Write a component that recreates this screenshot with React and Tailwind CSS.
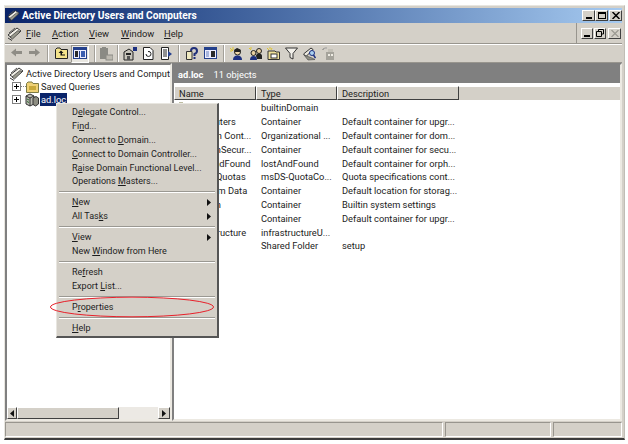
import React from 'react';

const rows = [
  ['Builtin', 'builtinDomain', ''],
  ['Computers', 'Container', 'Default container for upgr...'],
  ['Domain Cont...', 'Organizational ...', 'Default container for dom...'],
  ['ForeignSecur...', 'Container', 'Default container for secu...'],
  ['LostAndFound', 'lostAndFound', 'Default container for orph...'],
  ['NTDS Quotas', 'msDS-QuotaCo...', 'Quota specifications cont...'],
  ['Program Data', 'Container', 'Default location for storag...'],
  ['System', 'Container', 'Builtin system settings'],
  ['Users', 'Container', 'Default container for upgr...'],
  ['Infrastructure', 'infrastructureU...', ''],
  ['setup', 'Shared Folder', 'setup'],
];

const raised = 'border border-t-white border-l-white border-r-[#404040] border-b-[#404040] bg-[#d4d0c8]';
const sunken = 'border-2 border-t-[#808080] border-l-[#808080] border-r-[#ece9e2] border-b-[#ece9e2]';

const Mnemonic = ({ before, letter, after }) => (
  <span>{before}<span className="underline">{letter}</span>{after}</span>
);

const MenuItem = ({ before = '', letter, after = '', arrow }) => (
  <div className="flex items-center justify-between h-[13.8px] pl-[13px] pr-[4px]">
    <Mnemonic before={before} letter={letter} after={after} />
    {arrow && <svg width="4" height="7" viewBox="0 0 4 7"><path d="M0 0L4 3.5L0 7Z" fill="#111" /></svg>}
  </div>
);

const MenuSep = () => <div className="my-[2.6px] h-[2px] border-t border-t-[#9a9892] border-b border-b-white" />;

const Sep = ({ ml }) => (
  <div className={`w-[2px] h-[17px] border-l border-l-[#a3a099] border-r border-r-white ${ml}`} />
);

const Plus = () => (
  <svg width="9" height="9" viewBox="0 0 9 9" className="shrink-0">
    <rect x="0.5" y="0.5" width="8" height="8" fill="#fff" stroke="#808080" />
    <path d="M2 4.5H7M4.5 2V7" stroke="#000" />
  </svg>
);

const RootIcon = ({ size = 15 }) => (
  <svg width={size} height={size} viewBox="0 0 15 15" className="shrink-0">
    <path d="M1 9L10 2L14 5L5 12Z" fill="#f2f0e8" stroke="#333" />
    <path d="M3 11L11 4.5L13 6L5.5 13Z" fill="#9a9a8e" stroke="#333" strokeWidth="0.7" />
    <path d="M2 7L8 2" stroke="#555" />
    <path d="M1 12L5 14.5" stroke="#333" />
  </svg>
);

const Folder = () => (
  <svg width="13" height="12" viewBox="0 0 13 12" className="shrink-0">
    <path d="M0.5 2.5L2 1H6L7 2.5H12.5V11.5H0.5Z" fill="#efd175" stroke="#7d7b45" />
    <rect x="3" y="5" width="7" height="4" fill="#c9a93a" />
  </svg>
);

const DomainIcon = () => (
  <svg width="14" height="14" viewBox="0 0 14 14" className="shrink-0">
    <path d="M1 3L5 1L9 3V11L5 13L1 11Z" fill="#b9b9b0" stroke="#333" />
    <path d="M5 5V13M1 3L5 5L9 3" stroke="#333" fill="none" />
    <path d="M8 5L11 3.5L13.5 5V11L10.5 13L8 11.5Z" fill="#8d8d82" stroke="#333" />
    <path d="M2 6L4 7M2 8.5L4 9.5" stroke="#2f6b2f" />
  </svg>
);

// toolbar icons
const icons = {
  back: <path d="M0 5.5L5 1.5V4H11V7H5V9.5Z" fill="#8f8d86" />,
  forward: <path d="M11 5.5L6 1.5V4H0V7H6V9.5Z" fill="#8f8d86" />,
  up: (
    <g>
      <path d="M0.5 2.5L2 1H5L6 2.5H12.5V11.5H0.5Z" fill="#f4e38b" stroke="#222" />
      <path d="M6 3.5L3.5 6H5.5V8.5H10V7.5H7V6H8.5Z" fill="#111" />
    </g>
  ),
  tree: (
    <g>
      <rect x="0.5" y="0.5" width="13" height="11" fill="#eef" stroke="#24408c" />
      <rect x="1" y="1" width="12" height="2" fill="#24408c" />
      <rect x="2" y="4" width="3" height="6" fill="#2a2a2a" />
      <rect x="6" y="4" width="1" height="7" fill="#24408c" />
      <rect x="8" y="4" width="4" height="6" fill="#3a5db0" />
    </g>
  ),
  del: (
    <g fill="#8a8a84">
      <path d="M1 1H9V12H1Z" />
      <path d="M3 0H7V2H3Z" />
      <rect x="7" y="8" width="7" height="5" fill="#bcb9b0" stroke="#8a8a84" />
    </g>
  ),
  props: (
    <g>
      <path d="M1 5L6 2L10 5V13H1Z" fill="#c7c4ba" stroke="#222" />
      <rect x="3" y="6" width="5" height="2" fill="#222" />
      <rect x="4" y="9" width="3" height="4" fill="#555" />
      <path d="M10 0H14V4H10Z" fill="#1c2f80" />
    </g>
  ),
  refresh: (
    <g>
      <path d="M0.5 0.5H7L10 3.5V12.5H0.5Z" fill="#fff" stroke="#222" />
      <path d="M3 7A2.5 2.5 0 1 0 5 4.5" fill="none" stroke="#222" />
    </g>
  ),
  exportList: (
    <g>
      <path d="M0.5 0.5H7.5V12.5H0.5Z" fill="#fff" stroke="#222" />
      <path d="M2 3H6M2 5H6M2 7H6M2 9H6" stroke="#222" />
      <path d="M7 4L11 7L7 10Z" fill="#26408f" />
    </g>
  ),
  help: (
    <g>
      <path d="M0.5 4.5H6V12.5H0.5Z" fill="#efe9c0" stroke="#333" />
      <path d="M5 4Q5 1 8 1Q11 1 11 4Q11 6 8.5 7V9" fill="none" stroke="#1f2f7a" strokeWidth="2" />
      <rect x="7.5" y="10" width="2" height="2" fill="#1f2f7a" />
    </g>
  ),
  mmc: (
    <g>
      <rect x="0.5" y="0.5" width="12" height="11" fill="#eef" stroke="#24408c" />
      <rect x="1" y="1" width="11" height="2" fill="#24408c" />
      <rect x="7" y="4" width="4" height="6" fill="#2a2a2a" />
      <rect x="2" y="4" width="3" height="6" fill="#a9b6dd" />
    </g>
  ),
  user: (
    <g>
      <path d="M0 1L3 4M3 0V3M0 4H2" stroke="#e2c72c" />
      <circle cx="7.5" cy="5" r="3" fill="#f0d7a8" stroke="#222" />
      <path d="M4 3L7 1L11 3L10 5H5Z" fill="#222" />
      <path d="M3 13Q3 8.5 7.5 8.5Q12 8.5 12 13Z" fill="#1c2f80" />
    </g>
  ),
  group: (
    <g>
      <path d="M0 1L2 3M2 0V2" stroke="#e2c72c" />
      <circle cx="4.5" cy="6" r="2.5" fill="#e8cfa0" stroke="#222" />
      <circle cx="10" cy="4" r="2.5" fill="#e8cfa0" stroke="#222" />
      <path d="M7 9Q7 6.5 10 6.5Q13 6.5 13 9V12H8Z" fill="#222" />
      <path d="M1 13Q1 9 4.5 9Q8 9 8 13Z" fill="#1c2f80" />
    </g>
  ),
  ou: (
    <g>
      <path d="M0 1L2 3M3 0V2M5 1L4 3" stroke="#e2c72c" />
      <path d="M1 4H8L9 5H12.5V12.5H1Z" fill="#efe19a" stroke="#333" />
      <rect x="4" y="7" width="6" height="4" fill="#fff" stroke="#333" />
    </g>
  ),
  filter: <path d="M0.5 1H12.5L8 6.5V12L5 10.5V6.5Z" fill="#f2f0ea" stroke="#333" />,
  find: (
    <g>
      <path d="M0.5 7L8 1L10 2.5L3 9.5Z" fill="#ece9e0" stroke="#333" />
      <path d="M1 8L9 11L12 12.5L5 13Z" fill="#8f8f84" stroke="#444" strokeWidth="0.6" />
      <circle cx="9" cy="6" r="2.5" fill="#aad0f0" stroke="#1c2f80" />
      <path d="M10.5 8L12.5 11" stroke="#1c2f80" strokeWidth="1.5" />
    </g>
  ),
  domain: (
    <g>
      <path d="M1 3Q2 0 5 1" stroke="#999" fill="none" />
      <path d="M4 5H12V13H4Z" fill="#a5a39b" />
      <path d="M6 2H11V5H6Z" fill="#c3c0b7" />
      <path d="M6 7H8V9H6ZM9 7H11V9H9Z" fill="#efece4" />
      <path d="M0 3L2 1" stroke="#a5a39b" />
    </g>
  ),
};

const Tool = ({ name, w = 14, ml = 0 }) => (
  <svg width={w} height="14" viewBox={`0 0 ${w} 14`} style={{ marginLeft: ml }} className="shrink-0">
    {icons[name]}
  </svg>
);

const HeaderCell = ({ width, children }) => (
  <div className={`${raised} ${width} h-[14px] pl-[4px] flex items-center border-r-[#555] border-b-[#555]`}>{children}</div>
);

const WinButton = ({ children, width = 'w-[13px]' }) => (
  <div className={`${raised} ${width} h-[11px] flex items-center justify-center`}>{children}</div>
);

export default function App() {
  return (
    <div className="w-[628px] h-[444px] bg-white pt-[5px] pl-[4px] overflow-hidden relative text-[9.3px] leading-[13px] text-[#1c1c1c]" style={{ fontFamily: 'Roboto, "Liberation Sans", sans-serif' }}>
      <div className="w-[621px] h-[435px] flex flex-col bg-[#d4d0c8] border-t border-t-[#e8e6e0] border-l border-l-[#e8e6e0] border-r border-r-[#c0bdb5] border-b-2 border-b-[#3c3c3c] pt-[1px] pb-[1px] pr-[2px]">
        {/* title bar */}
        <div className="h-[15px] mt-[1px] flex items-center justify-between pl-[2px] bg-gradient-to-r from-[#0a246a] to-[#a6caf0]">
          <div className="flex items-center gap-[2px]">
            <RootIcon size={13} />
            <span className="font-bold text-white text-[10.2px]">Active Directory Users and Computers</span>
          </div>
          <div className="flex items-center">
            <WinButton><div className="w-[6px] h-[2px] mt-[5px] bg-black" /></WinButton>
            <WinButton><div className="w-[8px] h-[7px] border border-black border-t-2" /></WinButton>
            <div className="ml-[1px]">
              <WinButton>
                <svg width="8" height="7" viewBox="0 0 8 7"><path d="M0.5 0L7.5 7M7.5 0L0.5 7" stroke="#000" strokeWidth="1.5" /></svg>
              </WinButton>
            </div>
          </div>
        </div>

        {/* menu bar */}
        <div className="h-[21px] flex items-center justify-between border-b border-b-[#98958e] pl-[2px] pr-[1px]">
          <div className="flex items-center">
            <RootIcon size={15} />
            <span className="ml-[4px] w-[26px]"><u>F</u>ile</span>
            <span className="w-[37px]"><u>A</u>ction</span>
            <span className="w-[32px]"><u>V</u>iew</span>
            <span className="w-[43px]"><u>W</u>indow</span>
            <span><u>H</u>elp</span>
          </div>
          <div className="flex items-center gap-[1px] pl-[4px] border-l border-l-[#98958e] h-full">
            <div className={`${raised} w-[12px] h-[11px] flex items-end justify-center pb-[1px]`}><div className="w-[6px] h-[2px] bg-black" /></div>
            <div className={`${raised} w-[12px] h-[11px] flex items-center justify-center`}>
              <svg width="8" height="8" viewBox="0 0 8 8"><path d="M2.5 2V0.5H7.5V5H6M0.5 2.5H5.5V7.5H0.5Z" fill="none" stroke="#000" /></svg>
            </div>
            <div className={`${raised} w-[13px] h-[11px] ml-[1px] flex items-center justify-center`}>
              <svg width="8" height="7" viewBox="0 0 8 7"><path d="M0.5 0L7.5 7M7.5 0L0.5 7" stroke="#9a9890" strokeWidth="1.2" /></svg>
            </div>
          </div>
        </div>

        {/* toolbar */}
        <div className="h-[19px] flex items-center pl-[6px] border-t border-t-white border-b border-b-[#98958e]">
          <Tool name="back" w={11} />
          <Tool name="forward" w={11} ml={7} />
          <Sep ml="ml-[7px]" />
          <Tool name="up" ml={6} />
          <div className="ml-[2px] w-[18px] h-[18px] bg-[#e9e7e1] border border-t-[#98958e] border-l-[#98958e] border-r-white border-b-white flex items-center justify-center">
            <Tool name="tree" />
          </div>
          <Sep ml="ml-[5px]" />
          <Tool name="del" ml={3} />
          <Sep ml="ml-[4px]" />
          <Tool name="props" ml={4} />
          <Tool name="refresh" w={11} ml={6} />
          <Tool name="exportList" w={11} ml={7} />
          <Sep ml="ml-[6px]" />
          <Tool name="help" w={13} ml={6} />
          <Tool name="mmc" w={13} ml={5} />
          <Sep ml="ml-[6px]" />
          <Tool name="user" w={13} ml={5} />
          <Tool name="group" w={13} ml={6} />
          <Tool name="ou" w={13} ml={5} />
          <Tool name="filter" w={13} ml={5} />
          <Tool name="find" w={13} ml={5} />
          <Tool name="domain" ml={6} />
        </div>

        {/* panes */}
        <div className="flex flex-1 min-h-0">
          <div className={`w-[167px] shrink-0 ${sunken} bg-white flex flex-col`}>
            <div className="flex-1 overflow-hidden whitespace-nowrap">
              <div className="flex items-center h-[14px] pl-[2px] gap-[2px] mt-[1px]">
                <RootIcon />
                <span>Active Directory Users and Computers</span>
              </div>
              <div className="flex items-center h-[13px] pl-[5px]">
                <Plus />
                <div className="w-[5px] border-t border-dotted border-[#808080]" />
                <Folder />
                <span className="ml-[2px]">Saved Queries</span>
              </div>
              <div className="flex items-center h-[13px] pl-[5px]">
                <Plus />
                <div className="w-[4px]" />
                <DomainIcon />
                <span className="ml-[1px] px-[1px] bg-[#0a246a] text-white">ad.loc</span>
              </div>
            </div>
            <div className="h-[12px] flex bg-[#ece9e4]">
              <div className={`${raised} w-[10px] flex items-center justify-center`}>
                <svg width="4" height="7" viewBox="0 0 4 7"><path d="M4 0L0 3.5L4 7Z" fill="#111" /></svg>
              </div>
              <div className={`${raised} w-[102px]`} />
              <div className="flex-1" />
              <div className={`${raised} w-[12px] flex items-center justify-center`}>
                <svg width="4" height="7" viewBox="0 0 4 7"><path d="M0 0L4 3.5L0 7Z" fill="#111" /></svg>
              </div>
            </div>
          </div>

          <div className={`flex-1 ${sunken} bg-white flex flex-col min-w-0`}>
            <div className="h-[18px] bg-[#808080] text-white flex items-center pl-[4px] shrink-0">
              <span className="font-bold">ad.loc</span>
              <span className="ml-[10px]">11 objects</span>
            </div>
            <div className="flex h-[14px] mt-[3px] shrink-0 bg-[#d4d0c8]">
              <HeaderCell width="w-[82px]">Name</HeaderCell>
              <HeaderCell width="w-[81px]">Type</HeaderCell>
              <HeaderCell width="w-[122px]">Description</HeaderCell>
              <div className="flex-1 border-t border-t-white" />
            </div>
            <div className="pt-[1px]">
              {rows.map((r, i) => (
                <div key={i} className="flex h-[13.8px] items-center whitespace-nowrap">
                  <span className="w-[82px] pl-[3px] flex items-center"><Folder />{r[0]}</span>
                  <span className="w-[81px] pl-[5px]">{r[1]}</span>
                  <span className="pl-[5px]">{r[2]}</span>
                </div>
              ))}
            </div>
          </div>
        </div>

        {/* status bar */}
        <div className="h-[15px] mt-[1px] flex gap-[2px] shrink-0">
          <div className="w-[438px] border border-t-[#98958e] border-l-[#98958e] border-r-white border-b-white" />
          <div className="w-[106px] border border-t-[#98958e] border-l-[#98958e] border-r-white border-b-white" />
          <div className="flex-1 border border-t-[#98958e] border-l-[#98958e] border-r-white border-b-white" />
        </div>
      </div>

      {/* context menu */}
      <div className="absolute left-[56px] top-[103px] w-[163px] h-[235px] bg-[#d4d0c8] border border-t-[#e8e6e0] border-l-[#e8e6e0] border-r-2 border-b-2 border-r-[#555] border-b-[#555] pt-[2px] px-[2px] whitespace-nowrap text-[9px]">
        <MenuItem before="D" letter="e" after="legate Control..." />
        <MenuItem before="Fi" letter="n" after="d..." />
        <MenuItem before="Connect to " letter="D" after="omain..." />
        <MenuItem letter="C" after="onnect to Domain Controller..." />
        <MenuItem before="R" letter="a" after="ise Domain Functional Level..." />
        <MenuItem before="Operations " letter="M" after="asters..." />
        <MenuSep />
        <MenuItem letter="N" after="ew" arrow />
        <MenuItem before="All Tas" letter="k" after="s" arrow />
        <MenuSep />
        <MenuItem letter="V" after="iew" arrow />
        <MenuItem before="New " letter="W" after="indow from Here" />
        <MenuSep />
        <MenuItem before="Re" letter="f" after="resh" />
        <MenuItem before="Export " letter="L" after="ist..." />
        <MenuSep />
        <MenuItem before="P" letter="r" after="operties" />
        <MenuSep />
        <MenuItem letter="H" after="elp" />
      </div>

      {/* red ellipse annotation */}
      <svg width="168" height="24" viewBox="0 0 168 24" className="absolute left-[48px] top-[295px]">
        <ellipse cx="84" cy="12" rx="81.5" ry="9.8" fill="none" stroke="#e8202a" />
      </svg>
    </div>
  );
}
